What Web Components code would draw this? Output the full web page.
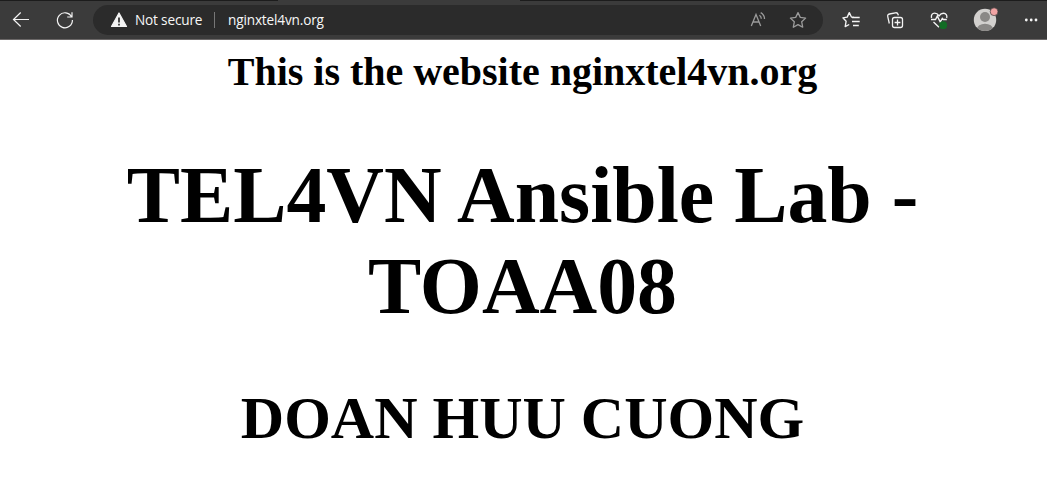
<!DOCTYPE html>
<html lang="en">
<head>
<meta charset="utf-8">
<title>nginxtel4vn.org</title>
<style>
html,body{margin:0;background:#fff}
body{height:487px;overflow:hidden}
</style>
</head>
<body>
<browser-toolbar>
  <address-bar slot="address"><span slot="status">Not secure</span><span slot="url">nginxtel4vn.org</span></address-bar>
</browser-toolbar>
<site-page>
  <site-heading style="--size:40px;--line:46px;--gap:9px;--track:-.02px">This is the website nginxtel4vn.org</site-heading>
  <site-heading style="--size:79.8px;--line:91px;--gap:55px;--track:0px">TEL4VN Ansible Lab - TOAA08</site-heading>
  <site-heading style="--size:60px;--line:69px;--gap:52px;--track:0px">DOAN HUU CUONG</site-heading>
</site-page>
<script>
const define = (name, html) => customElements.define(name, class extends HTMLElement {
  constructor() {
    super();
    this.attachShadow({mode: 'open'}).innerHTML = html;
  }
});

const icons = {
  back: '<path d="M21 9.5H5.5M12.7 2.5 5.5 9.5l7.2 7"/>',
  reload: '<path d="M16.6 6.9A7.5 7.5 0 1 0 17.4 10M17 2.2v4.8h-4.8"/>',
  warning: '<path fill="currentColor" stroke="currentColor" stroke-linejoin="round" d="M10 3 17.5 16.5h-15z"/><path stroke="#2b2b2b" stroke-width="1.7" d="M10 7.5v5M10 13.8v1.8"/>',
  read: '<path stroke-width="1.3" d="M3.3 16 8 4.5 12.7 16M4.8 12h6.4M11.4 5.2c1.3.9 1.9 2 1.9 3.6M12.7 2.6c2.4 1.4 3.8 3.3 3.8 6.3"/>',
  star: '<path stroke-linejoin="round" stroke-width="1.3" d="m10 2.6 2.3 4.8 5.3.7-3.9 3.7 1 5.4-4.7-2.6-4.7 2.6 1-5.4-3.9-3.7 5.3-.7z"/>',
  favorites: '<path stroke-linejoin="round" stroke-width="1.35" d="M13 7.1 10.4 7 8.3 2.6 6.2 7.1l-4.3.7 3.2 3.5-.9 5.3 4-2.1M11 7.5h7.7M11 11.5h7.7M12 15.5h5.8"/>',
  collections: '<path stroke-width="1.3" d="M4.3 13.5 2.8 6.8C2.4 5.2 3 4.3 4.5 4l5.8-1.2c1.5-.3 2.4.3 2.8 1.7l.2.8"/><rect stroke-width="1.3" x="7.5" y="7.5" width="10" height="10" rx="2"/><path stroke-width="1.3" d="M12.5 9.6v5.8M9.6 12.5h5.8"/>',
  health: '<path stroke-width="1.35" d="M2.5 8C1.9 5 3.4 3.2 5.6 3.2c2 0 3.4 1.1 4.5 2.6 1-1.5 2.4-2.6 4.4-2.6 2.4 0 3.9 2 3.2 4.8M2 9.5h4.5l1.8-3.4 3 6 2-3.7 1.1 1.1h3.4M4.5 12l5.5 5.2"/><circle cx="14.2" cy="15.2" r="3.9" fill="#126c25" stroke="none"/>',
  more: '<g fill="currentColor" stroke="none"><circle cx="5.3" cy="10" r="1.4"/><circle cx="10.2" cy="10" r="1.4"/><circle cx="15" cy="10" r="1.4"/></g>'
};

customElements.define('tool-icon', class extends HTMLElement {
  connectedCallback() {
    if (this.shadowRoot) return;
    this.attachShadow({mode: 'open'}).innerHTML = `
      <style>:host{display:block;width:20px;height:20px;flex:none;color:#f4f4f4}svg{display:block;overflow:visible}</style>
      <svg width="20" height="20" viewBox="0 0 20 20" fill="none" stroke="currentColor" stroke-width="1.2">${icons[this.getAttribute('name')]}</svg>`;
  }
});

define('user-avatar', `
  <style>:host{display:block;width:24px;height:24px;flex:none}svg{display:block;overflow:visible}</style>
  <svg width="24" height="24" viewBox="0 0 24 24">
    <clipPath id="disc"><circle cx="11" cy="11.9" r="11.2"/></clipPath>
    <circle cx="11" cy="11.9" r="11.2" fill="#d2d0ce"/>
    <g clip-path="url(#disc)" fill="#8a8886"><circle cx="11" cy="9" r="5"/><ellipse cx="11" cy="21" rx="8" ry="5.3"/></g>
    <circle cx="20.1" cy="3.7" r="3.9" fill="#f1a3a3" stroke="#3b3b3b" stroke-width=".7"/>
  </svg>`);

define('address-bar', `
  <style>
    :host{display:flex;align-items:center;box-sizing:border-box;width:730px;height:30px;border-radius:15px;background:#2b2b2b;padding:0 15px 0 16px;color:#f7f7f7;font:13.6px/20px "Open Sans","Noto Sans",sans-serif}
    .status{width:70px;margin-left:6px;white-space:nowrap;letter-spacing:-.17px}
    .rule{width:1px;height:16px;background:#777;margin:0 13px 0 9px}
    .url{flex:1;letter-spacing:-.15px}
    tool-icon[name=read],tool-icon[name=star]{color:#9b9b9b}
    tool-icon[name=star]{margin-left:20px}
  </style>
  <tool-icon name="warning"></tool-icon>
  <div class="status"><slot name="status"></slot></div><div class="rule"></div>
  <div class="url"><slot name="url"></slot></div>
  <tool-icon name="read"></tool-icon><tool-icon name="star"></tool-icon>`);

define('browser-toolbar', `
  <style>
    :host{display:flex;align-items:center;box-sizing:border-box;height:40px;padding:1px 0 0 8px;border-bottom:1px solid #6b6868;
      background:linear-gradient(90deg,#1c1c1c 278px,#3b3b3b 278px 520px,#1c1c1c 520px) 0 0/100% 1px no-repeat #3b3b3b}
    .address{margin-left:18px}
    .reload{margin-left:27px}
    .actions{display:flex;align-items:center;margin-left:18px}
    .actions tool-icon+tool-icon{margin-left:24px}
    user-avatar{margin-left:25px}
    .actions .more{margin-left:23px}
  </style>
  <tool-icon name="back"></tool-icon><tool-icon class="reload" name="reload"></tool-icon>
  <div class="address"><slot name="address"></slot></div>
  <div class="actions">
    <tool-icon name="favorites"></tool-icon><tool-icon name="collections"></tool-icon><tool-icon name="health"></tool-icon>
    <user-avatar></user-avatar><tool-icon class="more" name="more"></tool-icon>
  </div>`);

define('site-page', `<style>:host{display:flow-root;padding:0 10px 0 8px;color:#000;font-family:"Liberation Serif","Times New Roman",serif}</style><slot></slot>`);

define('site-heading', `
  <style>
    :host{display:block}
    h1{margin:var(--gap) 0 0;font-size:var(--size);line-height:var(--line);letter-spacing:var(--track);font-weight:700;text-align:center}
  </style><h1><slot></slot></h1>`);
</script>
</body>
</html>
